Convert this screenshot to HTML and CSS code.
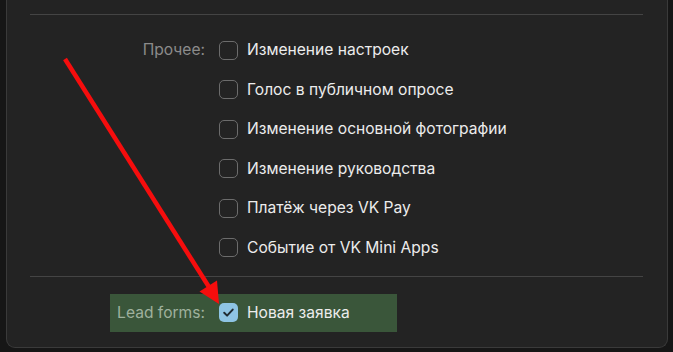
FILE: index.html
```html
<!DOCTYPE html>
<html lang="ru">
<head>
	<meta charset="UTF-8">
	<title>Типы событий</title>
	<link rel="stylesheet" href="styles.css">
</head>
<body>
	<div class="panel">
		<div class="divider"></div>
		<div class="group">
			<div class="label">Прочее:</div>
			<ul class="options">
				<li><span class="check"></span>Изменение настроек</li>
				<li><span class="check"></span>Голос в публичном опросе</li>
				<li><span class="check"></span>Изменение основной фотографии</li>
				<li><span class="check"></span>Изменение руководства</li>
				<li><span class="check"></span>Платёж через VK Pay</li>
				<li><span class="check"></span>Событие от VK Mini Apps</li>
			</ul>
		</div>
		<div class="divider bottom"></div>
		<div class="lead">
			<div class="label">Lead forms:</div>
			<div class="option">
				<span class="check on">
					<svg width="19" height="19" viewBox="0 0 19 19"><path d="M5.2 9.8l2.9 2.8 5.6-6" fill="none" stroke="#1f2b33" stroke-width="2" stroke-linecap="round" stroke-linejoin="round"/></svg>
				</span>Новая заявка
			</div>
		</div>
	</div>
	<svg class="arrow" width="673" height="352" viewBox="0 0 673 352">
		<line x1="65" y1="59" x2="209" y2="287" stroke="#f60d0d" stroke-width="4.5"/>
		<polygon points="219,304 199.5,291.5 217,280.5" fill="#f60d0d"/>
	</svg>
</body>
</html>
```
FILE: styles.css
```css
body{
	margin: 0;
	background: #161616;
	font-family: Inter, "Noto Sans", sans-serif;
	font-size: 15.6px;
	color: #ececec;
	height: 352px;
	overflow: hidden;
}
ul{
	list-style: none;
	margin: 0;
	padding: 0;
}
.panel{
	box-sizing: border-box;
	margin: 0 5px 0 6px;
	height: 348px;
	padding-top: 14px;
	background: #232323;
	border: 1px solid #3a3a3a;
	border-top: none;
	border-radius: 0 0 9px 9px;
}
.divider{
	height: 1px;
	margin: 0 24px 0 23px;
	background: #444;
}
.divider.bottom{
	margin-top: 18px;
}
.group{
	display: flex;
	margin-top: 25px;
}
.label{
	width: 198px;
	margin-right: 14px;
	text-align: right;
	white-space: nowrap;
	color: #8b8b8b;
	line-height: 20px;
	height: 20px;
}
.options{
	display: flex;
	flex-direction: column;
	gap: 19.6px;
}
.options li, .option{
	display: flex;
	align-items: center;
	height: 20px;
	line-height: 20px;
	white-space: nowrap;
}
.check{
	box-sizing: border-box;
	width: 19px;
	height: 19px;
	margin-right: 9px;
	border: 1.5px solid #6c6c6c;
	border-radius: 5px;
}
.check.on{
	border: none;
	background: #8ec4e4;
}
.check svg{
	display: block;
}
.lead{
	display: flex;
	align-items: center;
	box-sizing: border-box;
	width: 287px;
	height: 38px;
	margin: 17px 0 0 103px;
	padding-left: 6px;
	background: #3a563a;
}
.lead .label{
	width: 89px;
	color: #9fb19d;
}
.arrow{
	position: absolute;
	top: 0;
	left: 0;
}
```
